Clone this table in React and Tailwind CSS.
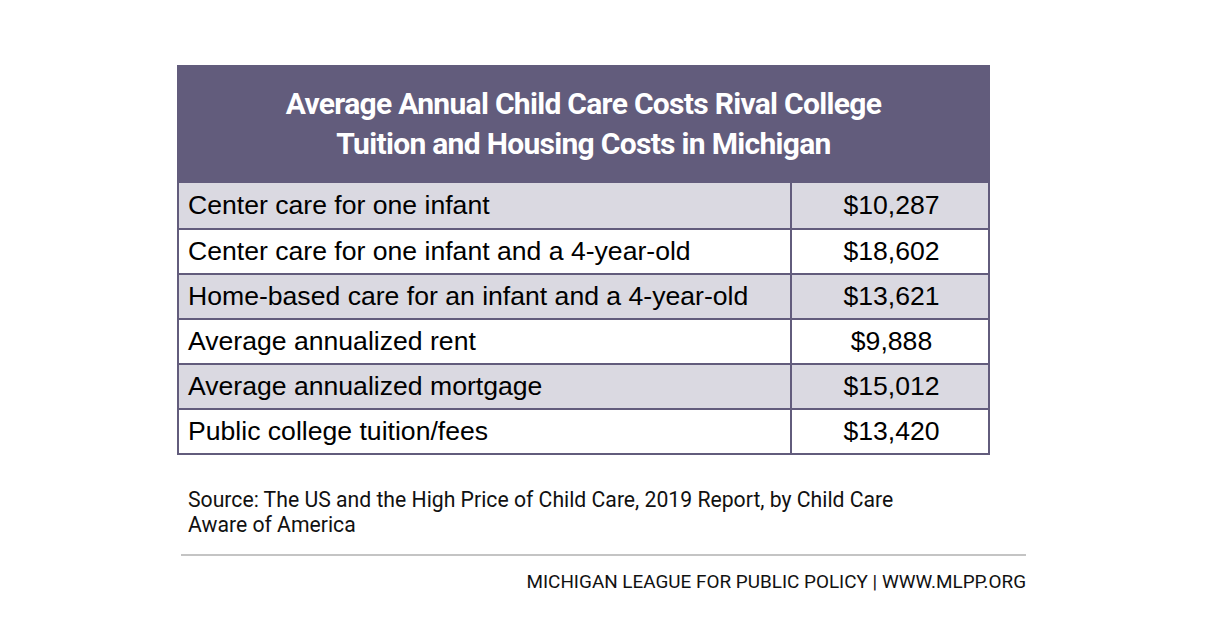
const rows = [
  ['Center care for one infant', '$10,287'],
  ['Center care for one infant and a 4-year-old', '$18,602'],
  ['Home-based care for an infant and a 4-year-old', '$13,621'],
  ['Average annualized rent', '$9,888'],
  ['Average annualized mortgage', '$15,012'],
  ['Public college tuition/fees', '$13,420'],
];

export default function App() {
  return (
    <div className="w-[1228px] h-[638px] bg-white font-['Roboto',sans-serif]">
      <div className="pt-[65px] pl-[177px]">
        {/* Table */}
        <div className="w-[813px] border-2 border-[#625c7c]">
          <div className="h-[116px] pb-[3px] bg-[#625c7c] flex items-center justify-center text-center text-white font-bold text-[30px] leading-[40px] tracking-[-0.7px]">
            <h1>
              Average Annual Child Care Costs Rival College
              <br />
              Tuition and Housing Costs in Michigan
            </h1>
          </div>
          {rows.map(([label, value], i) => (
            <div
              key={label}
              className={`flex h-[45px] font-['Liberation_Sans',Arial,sans-serif] text-[26.6px] text-black ${
                i > 0 ? 'border-t-2 border-[#625c7c]' : ''
              } ${i % 2 === 0 ? 'bg-[#dad9e1]' : 'bg-white'}`}
            >
              <div className="w-[613px] pl-[9px] flex items-center border-r-2 border-[#625c7c]">
                {label}
              </div>
              <div className="flex-1 flex items-center justify-center pl-[3px]">{value}</div>
            </div>
          ))}
        </div>

        {/* Source */}
        <p className="mt-[32px] pl-[11px] text-[21.2px] leading-[25px] text-[#111] w-[780px]">
          Source: The US and the High Price of Child Care, 2019 Report, by Child Care Aware of America
        </p>
      </div>

      <div className="ml-[181px] mt-[17px] w-[845px] h-[2px] bg-[#c4c4c4]" />
      <div className="w-[1026px] mt-[15px] text-right text-[18.9px] leading-[22px] text-[#111]">
        MICHIGAN LEAGUE FOR PUBLIC POLICY | WWW.MLPP.ORG
      </div>
    </div>
  );
}
